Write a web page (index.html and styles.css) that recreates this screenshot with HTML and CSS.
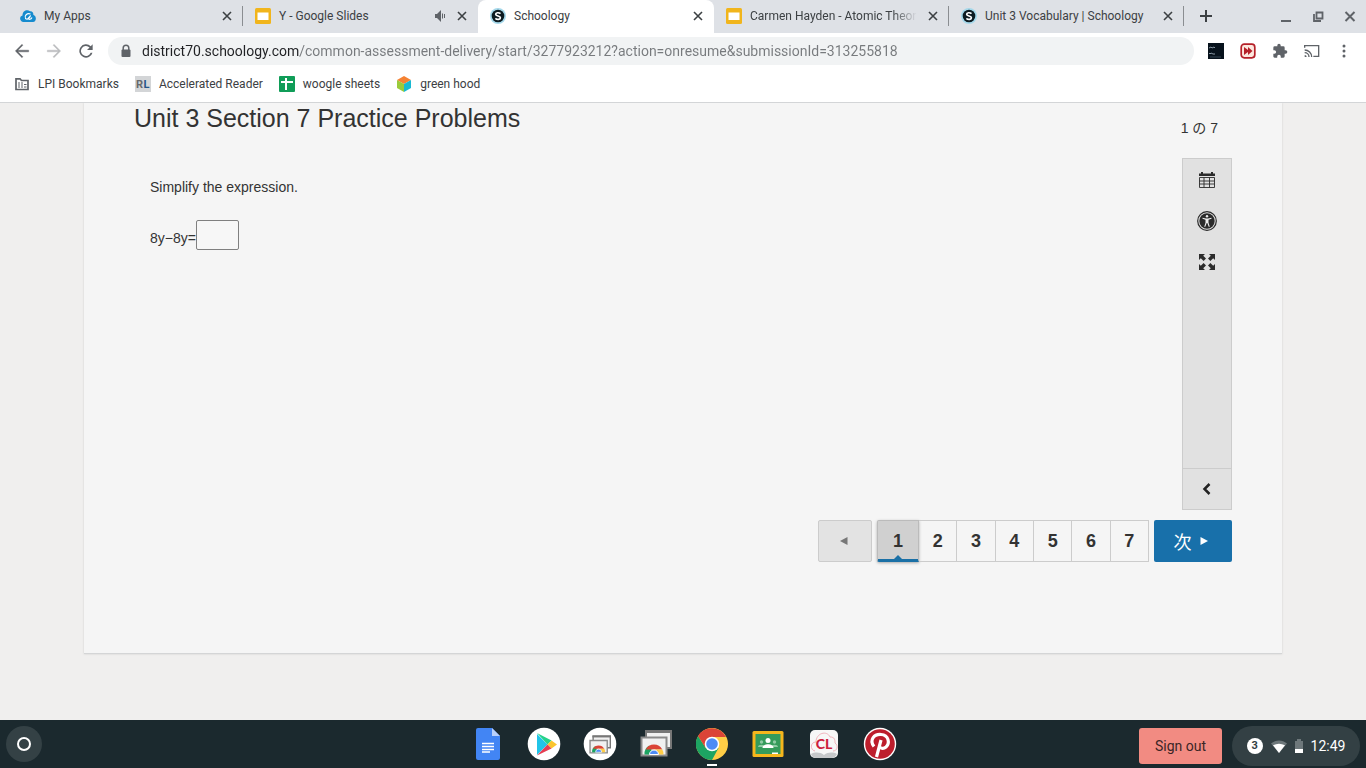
FILE: index.html
```html
<!DOCTYPE html>
<html lang="en">
<head>
  <meta charset="UTF-8" />
  <meta name="viewport" content="width=device-width, initial-scale=1" />
  <title>Schoology</title>
  <link rel="stylesheet" href="styles.css">
</head>
<body>
  <svg class="defs" aria-hidden="true">
    <symbol id="x" viewBox="0 0 16 16"><path d="M4 4l8 8M12 4l-8 8" fill="none" stroke="currentColor" stroke-width="1.6"/></symbol>
    <symbol id="slides" viewBox="0 0 16 16"><rect width="16" height="16" rx="1.5" fill="#f1b51c"/><rect x="2.5" y="4.5" width="11" height="7.500" fill="#fff"/></symbol>
    <symbol id="schoology" viewBox="0 0 16 16"><circle cx="8" cy="8" r="8" fill="#a5d8ea"/><circle cx="8" cy="8" r="6.300" fill="#0c1a20"/><path d="M10.500 5.700C9 4.300 5.700 4.400 5.700 6.300c0 2.200 4.700 1.200 4.700 3.500 0 2-3.400 2.200-5 .5" fill="none" stroke="#fff" stroke-width="1.700"/></symbol>
    <symbol id="chrome" viewBox="0 0 32 32">
      <circle cx="16" cy="16" r="16" fill="#ffcd46"/>
      <path d="M2.100 8A16 16 0 0 0 16 32l6.500-12L9.500 19.500z" fill="#1da462"/>
      <path d="M2.100 8A16 16 0 0 1 30 9H16L9.500 19.800z" fill="#db4437"/>
      <circle cx="16" cy="16" r="7.300" fill="#fff"/><circle cx="16" cy="16" r="5.800" fill="#4c8bf5"/>
    </symbol>
    <symbol id="remote" viewBox="0 0 32 32">
      <path d="M6 3h25v17H6z" fill="#f1f1f1" stroke="#777" stroke-width="2"/><path d="M5 2h27v3H5z" fill="#777"/>
      <path d="M1.500 9.500h25v18h-25z" fill="#f1f1f1" stroke="#8a8a8a" stroke-width="2"/>
      <path d="M4.500 26.500a9.500 9.500 0 0 1 4.700-9L14 26.500z" fill="#1da462"/><path d="M5.700 21.500a9.500 9.500 0 0 1 16.600 0H14z" fill="#db4437"/><path d="M14 21.500h8.300a9.500 9.500 0 0 1 1.200 5H14z" fill="#ffcd46"/>
      <path d="M9.500 26.500a4.500 4.500 0 0 1 9 0z" fill="#4c8bf5" stroke="#fff"/>
    </symbol>
  </svg>

  <header class="browser">
    <div class="tab-strip">
      <div class="tab">
        <svg class="favicon" viewBox="0 0 16 16"><path d="M3 14C-1 13-.5 8 2.500 7.500 2.500 3 7 1 10 3.300c2.500-.3 3.500 1.500 3.300 3.400C17 8 16.500 14 13 14z" fill="#168bce"/><path d="M10.500 6C7 4.500 4 8 5.500 10.500c2 1.800 4.500-.5 5-3L8 10.500c1 1.500 3 1 4-1" fill="none" stroke="#fff" stroke-width="1.100"/></svg>
        <span class="tab-title">My Apps</span>
        <button class="tab-close" aria-label="Close My Apps"><svg><use href="#x"/></svg></button>
      </div>
      <div class="tab no-line">
        <svg class="favicon"><use href="#slides"/></svg>
        <span class="tab-title">Y - Google Slides</span>
        <svg class="audio" viewBox="0 0 12 12"><path d="M1 4h2l4-4v12L3 8H1z" fill="#5f6368"/><path d="M8.500 3.500v5M10.500 4v4" stroke="#5f6368"/></svg>
        <button class="tab-close" aria-label="Close Google Slides"><svg><use href="#x"/></svg></button>
      </div>
      <div class="tab active">
        <svg class="favicon"><use href="#schoology"/></svg>
        <span class="tab-title">Schoology</span>
        <button class="tab-close" aria-label="Close Schoology"><svg><use href="#x"/></svg></button>
      </div>
      <div class="tab">
        <svg class="favicon"><use href="#slides"/></svg>
        <span class="tab-title fade">Carmen Hayden - Atomic Theor</span>
        <button class="tab-close" aria-label="Close Carmen Hayden"><svg><use href="#x"/></svg></button>
      </div>
      <div class="tab">
        <svg class="favicon"><use href="#schoology"/></svg>
        <span class="tab-title">Unit 3 Vocabulary | Schoology</span>
        <button class="tab-close" aria-label="Close Unit 3 Vocabulary"><svg><use href="#x"/></svg></button>
      </div>
      <button class="new-tab" aria-label="New tab"><svg viewBox="0 0 16 16"><path d="M8 2v12M2 8h12" stroke="#3c4043" stroke-width="2"/></svg></button>
      <div class="window-buttons">
        <button aria-label="Minimize"><svg viewBox="0 0 16 16"><path d="M3 13h10" stroke="#5f6368" stroke-width="2"/></svg></button>
        <button aria-label="Restore"><svg viewBox="0 0 16 16"><path d="M6.500 4.500h6v6h-6zM4 6v7h7" fill="none" stroke="#5f6368" stroke-width="1.800"/></svg></button>
        <button aria-label="Close window"><svg viewBox="0 0 16 16"><path d="M3.500 4l9 9M12.500 4l-9 9" stroke="#5f6368" stroke-width="2"/></svg></button>
      </div>
    </div>

    <div class="toolbar">
      <button aria-label="Back"><svg viewBox="0 0 24 24"><path d="M22 10.700H5.800l7.500-7.200L12 2 2 12l10 10 1.400-1.400-7.600-7.300H22z" fill="#5f6368" stroke="#5f6368" stroke-width=".6"/></svg></button>
      <button aria-label="Forward" disabled><svg viewBox="0 0 24 24"><path d="M2 10.700h16.200l-7.500-7.200L12 2l10 10-10 10-1.400-1.400 7.600-7.300H2z" fill="#babcbe" stroke="#babcbe" stroke-width=".6"/></svg></button>
      <button aria-label="Reload"><svg viewBox="0 0 24 24"><path d="M19.100 4.900A10 10 0 1 0 21.700 14.500H19A7.500 7.500 0 1 1 17.300 6.700L13.500 10.500H22V2z" fill="#5f6368"/></svg></button>
      <label class="address">
        <svg viewBox="0 0 10 14"><path d="M2.200 6V4a2.800 2.800 0 0 1 5.600 0v2" fill="none" stroke="#5f6368" stroke-width="1.500"/><rect x=".5" y="5.500" width="9" height="7.500" rx="1" fill="#5f6368"/></svg>
        <input type="text" aria-label="Address" value="district70.schoology.com/common-assessment-delivery/start/3277923212?action=onresume&amp;submissionId=313255818">
      </label>
      <div class="extensions">
        <button aria-label="Code extension"><svg viewBox="0 0 16 16"><path d="M0 0h16v16H0z" fill="#07121c"/><path d="M1 5l2-1 1 1 2-1 1 1M1 10l1 1 1-1 2 1h2" fill="none" stroke="#a9bac6" stroke-width=".8"/><path d="M2 14h11" stroke="#344553"/></svg></button>
        <button aria-label="Fast forward extension"><svg viewBox="0 0 16 16"><rect x="1.200" y="1.200" width="13.600" height="13.600" rx="3" fill="#fce8df" stroke="#b52129" stroke-width="1.700"/><path d="M4 4l4 3V4l4.500 4L8 12V9l-4 3z" fill="#b52129"/></svg></button>
        <button aria-label="Extensions"><svg viewBox="0 0 24 24"><path d="M20.500 11H19V7a2 2 0 0 0-2-2h-4V3.500a2.500 2.500 0 0 0-5 0V5H4a2 2 0 0 0-2 2v3.800h1.500a2.700 2.700 0 0 1 0 5.400H2V20c0 1.100.9 2 2 2h3.800v-1.500a2.700 2.700 0 0 1 5.400 0V22H17a2 2 0 0 0 2-2v-4h1.500a2.500 2.500 0 0 0 0-5z" fill="#5f6368"/></svg></button>
        <button aria-label="Cast"><svg viewBox="0 0 24 24"><path d="M1 7V4h21v16h-8" fill="none" stroke="#5f6368" stroke-width="2"/><path d="M1 10.500A10.500 10.500 0 0 1 11.500 21M1 14.500A6.500 6.500 0 0 1 7.500 21" fill="none" stroke="#5f6368" stroke-width="2"/><path d="M1 18a3 3 0 0 1 3 3H1z" fill="#5f6368"/></svg></button>
        <button aria-label="Menu"><svg viewBox="0 0 16 16" fill="#5f6368"><circle cx="8" cy="3" r="1.500"/><circle cx="8" cy="8" r="1.500"/><circle cx="8" cy="13" r="1.500"/></svg></button>
      </div>
    </div>

    <nav class="bookmarks">
      <a href="#"><svg viewBox="0 0 16 16"><path d="M2 2.800h4l1.500 1.700H14v9H2z" fill="none" stroke="#5f6368" stroke-width="1.700"/><path d="M4 7h2M7 7h2M4 9h2M7 9h2M4 11h2M7 11h2M10 8.500h2.500M10 11h2.500" stroke="#5f6368" stroke-width="1.200"/></svg>LPI Bookmarks</a>
      <a href="#"><svg viewBox="0 0 16 16"><path d="M0 0h16v16H0z" fill="#d3d5d7"/><text x="1" y="12" font-family="Roboto, sans-serif" font-size="11" font-weight="700" fill="#67696c">R</text><text x="8.500" y="12" font-family="Roboto, sans-serif" font-size="11" font-weight="700" fill="#24568a">L</text></svg>Accelerated Reader</a>
      <a href="#"><svg viewBox="0 0 16 16"><rect width="16" height="16" rx="1" fill="#109d58"/><path d="M2 6h12M7 2v12" stroke="#fff" stroke-width="2"/></svg>woogle sheets</a>
      <a href="#"><svg viewBox="0 0 16 16"><path d="M8 0l7 4-7 4-7-4z" fill="#f58233"/><path d="M1 4l7 4v8l-7-4z" fill="#9acb3b"/><path d="M15 4L8 8v8l7-4z" fill="#18b9d3"/></svg>green hood</a>
    </nav>
  </header>

  <main class="page">
    <section class="assessment" lang="ja">
      <div class="heading">
        <h1>Unit 3 Section 7 Practice Problems</h1>
        <span class="progress">1 の 7</span>
      </div>
      <div class="work-area">
        <div class="question">
          <p>Simplify the expression.</p>
          <label class="equation">8y−8y=<input type="text"></label>
        </div>
        <aside class="tools">
          <button aria-label="Calendar"><svg viewBox="0 0 18 18"><path d="M1 2.500h16V5H1z" fill="#2b2b2b"/><path d="M4 1v3M14 1v3" stroke="#2b2b2b" stroke-width="2"/><path d="M1.500 6.500h15v10h-15zM1.500 10h15M1.500 13h15M6 6.500v10M11.500 6.500v10" fill="none" stroke="#2b2b2b" stroke-width=".9"/></svg></button>
          <button aria-label="Accessibility"><svg viewBox="0 0 20 20"><circle cx="10" cy="10" r="9.300" fill="#e1e1e1" stroke="#2b2b2b" stroke-width="1.200"/><circle cx="10" cy="10" r="7.700" fill="#2b2b2b"/><circle cx="10" cy="5.200" r="1.200" fill="#eee"/><path d="M5.500 6.800L9 7.600h2l3.500-.8v1l-3 1v3l1.300 4h-1.100L10.300 12h-.6l-1.400 3.800H7.200l1.300-4v-3l-3-1z" fill="#eee"/></svg></button>
          <button aria-label="Full screen"><svg viewBox="0 0 18 18"><path d="M1 1h6L5.200 2.800 8 5.600 5.600 8 2.800 5.200 1 7zM17 1v6l-1.800-1.800L12.400 8 10 5.600l2.800-2.800L11 1zM1 17v-6l1.800 1.800L5.600 10 8 12.400l-2.800 2.800L7 17zM17 17h-6l1.800-1.800-2.800-2.800 2.400-2.400 2.800 2.800L17 11z" fill="#2b2b2b"/></svg></button>
          <button class="collapse" aria-label="Collapse tools"><svg viewBox="0 0 16 16"><path d="M10.500 3L5.500 8l5 5" fill="none" stroke="#222" stroke-width="2.500"/></svg></button>
        </aside>
      </div>
      <nav class="pager">
        <button class="previous" aria-label="Previous" disabled><svg viewBox="0 0 8 8"><path d="M7.500 0v8L0 4z" fill="#777"/></svg></button>
        <div class="numbers">
          <button class="current">1</button>
          <button>2</button>
          <button>3</button>
          <button>4</button>
          <button>5</button>
          <button>6</button>
          <button>7</button>
        </div>
        <button class="next">次<svg viewBox="0 0 8 8"><path d="M.5 0v8L8 4z" fill="#fff"/></svg></button>
      </nav>
    </section>
  </main>

  <footer class="shelf">
    <button class="launcher" aria-label="Launcher"><svg viewBox="0 0 16 16"><circle cx="8" cy="8" r="6" fill="none" stroke="#fff" stroke-width="2"/></svg></button>
    <div class="apps">
      <button aria-label="Docs"><svg viewBox="0 0 32 32"><path d="M6 0h14l8 8v22a2 2 0 0 1-2 2H6a2 2 0 0 1-2-2V2a2 2 0 0 1 2-2z" fill="#4285f4"/><path d="M20 0l8 8h-8z" fill="#b8d0fb"/><path d="M10 15.500h12M10 18.500h12M10 21.500h12M10 24h8" stroke="#fff" stroke-width="1.300"/></svg></button>
      <button aria-label="Play Store"><svg viewBox="0 0 32 32"><circle cx="16" cy="16" r="16.300" fill="#fff"/><path d="M9 6v21l10.500-10.500z" fill="#20c4e8"/><path d="M9 5l14.500 7.500-4 4z" fill="#25d28b"/><path d="M23.500 12.500l5.500 4-5.500 4-4-4z" fill="#fbc52d"/><path d="M9 27.500l10.500-11 4 4z" fill="#e63d51"/></svg></button>
      <button aria-label="Remote Desktop"><svg viewBox="0 0 32 32"><circle cx="16" cy="16" r="16.300" fill="#fff"/><use href="#remote" x="5" y="6" width="22" height="22"/></svg></button>
      <button aria-label="Chrome Remote Desktop"><svg><use href="#remote"/></svg></button>
      <button class="running" aria-label="Chrome"><svg><use href="#chrome"/></svg></button>
      <button aria-label="Classroom"><svg viewBox="0 0 32 32"><rect x="0.500" y="3" width="31" height="26" rx="1.500" fill="#f6b61c"/><path d="M3.500 6h25v20h-25z" fill="#359b5b"/><g fill="#8fcaa4"><circle cx="9.500" cy="14" r="1.700"/><circle cx="22.500" cy="14" r="1.700"/><path d="M6 19c0-3 7-3 7 0zM19 19c0-3 7-3 7 0z"/></g><circle cx="16" cy="12.500" r="2.500" fill="#fff"/><path d="M10.500 20c0-5 11-5 11 0z" fill="#fff"/><path d="M20 24.500h6v1.500h-6z" fill="#fff"/></svg></button>
      <button aria-label="CloudLibrary"><svg viewBox="0 0 32 32"><rect x="2" y="2" width="28" height="28" rx="5" fill="#f7f7f7"/><path d="M7 23c-5-1-5-9 1-9 0-9 11-12 14-5 5 0 5 3 5 6 4 3 2 8-2 8" fill="none" stroke="#eda2ad" stroke-width=".8"/><path d="M3 26c4-2 9-2 13 1 4-3 9-3 13-1-2 3-3 4-5 4H8c-2 0-4-1-5-4z" fill="#c6c8ca"/><text x="16" y="20.500" text-anchor="middle" font-family="Lato, sans-serif" font-size="14" font-weight="900" fill="#cd213d">CL</text></svg></button>
      <button aria-label="Pinterest"><svg viewBox="0 0 32 32"><circle cx="16" cy="16" r="16.200" fill="#fff"/><circle cx="16" cy="16" r="14.800" fill="#bd1e2c"/><path d="M10 18.500C5 12 10 6 17 6.500c8 .5 9 9 5 12.500-3 2.500-6 1-6.500-.5M17 12l-4.500 17" fill="none" stroke="#fff" stroke-width="3.200"/></svg></button>
    </div>
    <div class="session">
      <button class="sign-out">Sign out</button>
      <button class="status">
        <span class="count">3</span>
        <svg viewBox="0 0 16 16"><path d="M0 5.500c5-4 11-4 16 0L8 15z" fill="#6e787b"/><path d="M2 7.200c4-2 8-2 12 0L8 15z" fill="#fff"/></svg>
        <svg class="battery" viewBox="0 0 8 14"><path d="M0 2h2V0h4v2h2v12H0z" fill="#6e787b"/><path d="M0 10h8v4H0z" fill="#fff"/></svg>
        <span>12:49</span>
      </button>
    </div>
  </footer>
</body>
</html>
```
FILE: styles.css
```css
* {
  box-sizing: border-box;
}
body {
  margin: 0;
  min-height: 100vh;
  display: flex;
  flex-direction: column;
  font-family: Roboto, sans-serif;
  background: #f0efee;
}
button {
  display: flex;
  align-items: center;
  justify-content: center;
  padding: 0;
  border: none;
  background: none;
  font-family: inherit;
  color: inherit;
}
input {
  font-family: inherit;
}
svg {
  display: block;
  width: 16px;
  height: 16px;
  flex-shrink: 0;
}
.defs {
  position: absolute;
  width: 0;
  height: 0;
}

/* browser */
.browser {
  background: #fff;
  border-bottom: 1px solid #d3d5d7;
  color: #3c4043;
  font-size: 12px;
}
.tab-strip {
  display: flex;
  align-items: flex-start;
  height: 33px;
  padding-left: 8px;
  background: #dee1e6;
}
.tab {
  flex: 0 1 235px;
  min-width: 0;
  display: flex;
  align-items: center;
  gap: 8px;
  height: 20px;
  margin-top: 6px;
  padding: 0 7px 0 12px;
  border-right: 1px solid #8a8d91;
}
.tab.no-line {
  border-color: transparent;
}
.tab.active {
  flex-basis: 236px;
  height: 33px;
  margin-top: 0;
  padding-bottom: 1px;
  padding-right: 8px;
  background: #fff;
  border: none;
  border-radius: 8px 8px 0 0;
}
.tab-title {
  flex: 1;
  white-space: nowrap;
}
.fade {
  -webkit-mask-image: linear-gradient(to right, #000 85%, transparent);
  mask-image: linear-gradient(to right, #000 85%, transparent);
}
.tab .audio {
  width: 12px;
  height: 12px;
}
.new-tab,
.window-buttons {
  height: 32px;
}
.new-tab {
  width: 44px;
}
.window-buttons {
  display: flex;
  gap: 16px;
  margin-left: auto;
  padding-right: 8px;
}
.toolbar {
  display: flex;
  align-items: center;
  gap: 16px;
  height: 36px;
  padding: 0 14px;
}
.address {
  flex: 1;
  display: flex;
  align-items: center;
  gap: 10px;
  height: 28px;
  margin: 0 -2px;
  padding: 0 12px;
  border-radius: 14px;
  background: #f1f3f4;
}
.address svg {
  width: 12px;
  height: 14px;
}
.address input {
  flex: 1;
  min-width: 0;
  padding: 0;
  border: none;
  outline: none;
  font-size: 14px;
  color: #5f6368;
  background: linear-gradient(to right, #202124 158px, #777a7d 158px);
  -webkit-background-clip: text;
  background-clip: text;
  -webkit-text-fill-color: transparent;
}
.extensions {
  display: flex;
  gap: 16px;
}
.bookmarks {
  display: flex;
  align-items: center;
  gap: 16px;
  height: 33px;
  padding: 0 14px 3px;
}
.bookmarks a {
  display: flex;
  align-items: center;
  gap: 8px;
  color: inherit;
  text-decoration: none;
}

/* assessment */
.page {
  flex: 1;
  padding: 0 84px;
  font-family: "Liberation Sans", "Noto Sans CJK JP", sans-serif;
  font-size: 14px;
  color: #333;
}
.assessment {
  padding: 0 50px 91px;
  background: #f5f5f5;
  border-bottom: 1px solid #d4d5d6;
  box-shadow: 0 0 2px #ccc;
  clip-path: inset(0 -3px -3px);
}
.heading {
  display: flex;
  justify-content: space-between;
  height: 55px;
}
.heading h1 {
  margin: 0;
  font-size: 25px;
  font-weight: 400;
  line-height: 30px;
}
.progress {
  padding: 15px 14px 0 0;
  line-height: 20px;
}
.work-area {
  display: flex;
  justify-content: space-between;
}
.question {
  padding: 20px 16px;
}
.question p {
  margin: 0 0 24px;
  line-height: 18px;
}
.equation {
  display: flex;
  align-items: center;
  line-height: 36px;
}
.equation input {
  width: 43px;
  height: 30px;
  margin-bottom: 6px;
  border: 1px solid #808080;
  border-radius: 2px;
  background: #f7f7f7;
}
.tools {
  display: flex;
  flex-direction: column;
  width: 50px;
  min-height: 352px;
  border: 1px solid #ccc;
  background: #e1e1e1;
}
.tools button {
  height: 41px;
}
.tools svg {
  width: 18px;
  height: 18px;
}
.tools button:nth-child(2) svg {
  width: 20px;
  height: 20px;
}
.tools .collapse {
  margin-top: auto;
  border-top: 1px solid #ccc;
}
.tools .collapse svg {
  width: 16px;
  height: 16px;
}
.pager {
  display: flex;
  justify-content: flex-end;
  gap: 5px;
  margin-top: 10px;
  font-size: 18px;
}
.pager button {
  height: 42px;
}
.pager svg {
  width: 8px;
  height: 8px;
}
.pager .previous {
  width: 54px;
  padding-right: 3px;
  border: 1px solid #ccc;
  border-radius: 2px;
  background: #e3e3e3;
}
.numbers {
  display: flex;
  width: 272px;
}
.numbers button {
  position: relative;
  flex: 1;
  border: 1px solid #ccc;
  border-left: none;
  font-size: 18px;
  font-weight: 700;
}
.numbers .current {
  flex: 0 0 42px;
  border: 1px solid #bbb;
  border-bottom: 3px solid #1a70a6;
  border-radius: 2px 0 0 2px;
  background: #d0d0d0;
  padding-top: 2px;
  box-shadow: 0 1px 3px #aaa;
}
.numbers .current::after {
  content: "";
  position: absolute;
  bottom: 0;
  left: 50%;
  margin-left: -4px;
  border: 4px solid transparent;
  border-top: none;
  border-bottom-color: #1a70a6;
}
.pager .next {
  gap: 8px;
  width: 78px;
  padding-right: 5px;
  border-radius: 2px;
  background: #1870aa;
  color: #fff;
  font-size: 18px;
}

/* shelf */
.shelf {
  display: grid;
  grid-template-columns: 1fr auto 1fr;
  align-items: center;
  height: 48px;
  padding: 0 6px;
  background: #1b292e;
}
.launcher {
  width: 36px;
  height: 36px;
  border-radius: 50%;
  background: #344145;
}
.apps {
  display: flex;
  gap: 24px;
  padding-left: 2px;
}
.apps button {
  position: relative;
}
.apps svg {
  width: 32px;
  height: 32px;
  overflow: visible;
}
.running::after {
  content: "";
  position: absolute;
  bottom: -6px;
  width: 10px;
  height: 2px;
  background: #fff;
}
.session {
  display: flex;
  align-items: center;
  justify-content: flex-end;
  gap: 10px;
  padding-top: 4px;
}
.sign-out {
  width: 83px;
  height: 36px;
  border-radius: 3px;
  background: #f28b82;
  color: #3b2526;
  font-size: 14px;
}
.status {
  gap: 8px;
  width: 128px;
  height: 40px;
  border-radius: 20px;
  background: #334044;
  color: #fff;
  font-size: 14px;
}
.status .battery {
  width: 8px;
  height: 14px;
}
.count {
  width: 16px;
  border-radius: 50%;
  background: #fff;
  color: #334044;
  font-size: 11px;
  font-weight: 700;
  line-height: 16px;
}
```
